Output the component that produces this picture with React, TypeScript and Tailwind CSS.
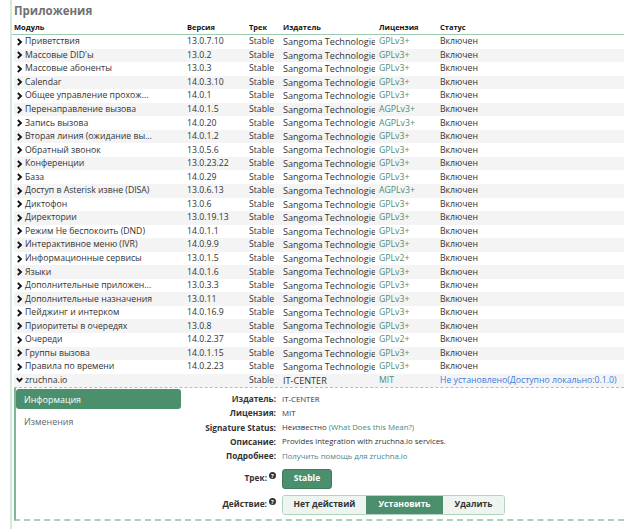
import React from "react";

type Mod = { name: string; ver: string; pub: string; lic: string; status: string };

const rows: Mod[] = [
  { name: "Приветствия", ver: "13.0.7.10", pub: "Sangoma Technologies", lic: "GPLv3+", status: "Включен" },
  { name: "Массовые DID'ы", ver: "13.0.2", pub: "Sangoma Technologies", lic: "GPLv3+", status: "Включен" },
  { name: "Массовые абоненты", ver: "13.0.3", pub: "Sangoma Technologies", lic: "GPLv3+", status: "Включен" },
  { name: "Calendar", ver: "14.0.3.10", pub: "Sangoma Technologies", lic: "GPLv3+", status: "Включен" },
  { name: "Общее управление прохож...", ver: "14.0.1", pub: "Sangoma Technologies", lic: "GPLv3+", status: "Включен" },
  { name: "Перенаправление вызова", ver: "14.0.1.5", pub: "Sangoma Technologies", lic: "AGPLv3+", status: "Включен" },
  { name: "Запись вызова", ver: "14.0.20", pub: "Sangoma Technologies", lic: "AGPLv3+", status: "Включен" },
  { name: "Вторая линия (ожидание вы...", ver: "14.0.1.2", pub: "Sangoma Technologies", lic: "GPLv3+", status: "Включен" },
  { name: "Обратный звонок", ver: "13.0.5.6", pub: "Sangoma Technologies", lic: "GPLv3+", status: "Включен" },
  { name: "Конференции", ver: "13.0.23.22", pub: "Sangoma Technologies", lic: "GPLv3+", status: "Включен" },
  { name: "База", ver: "14.0.29", pub: "Sangoma Technologies", lic: "GPLv3+", status: "Включен" },
  { name: "Доступ в Asterisk извне (DISA)", ver: "13.0.6.13", pub: "Sangoma Technologies", lic: "AGPLv3+", status: "Включен" },
  { name: "Диктофон", ver: "13.0.6", pub: "Sangoma Technologies", lic: "GPLv3+", status: "Включен" },
  { name: "Директории", ver: "13.0.19.13", pub: "Sangoma Technologies", lic: "GPLv3+", status: "Включен" },
  { name: "Режим Не беспокоить (DND)", ver: "14.0.1.1", pub: "Sangoma Technologies", lic: "GPLv3+", status: "Включен" },
  { name: "Интерактивное меню (IVR)", ver: "14.0.9.9", pub: "Sangoma Technologies", lic: "GPLv3+", status: "Включен" },
  { name: "Информационные сервисы", ver: "13.0.1.5", pub: "Sangoma Technologies", lic: "GPLv2+", status: "Включен" },
  { name: "Языки", ver: "14.0.1.6", pub: "Sangoma Technologies", lic: "GPLv3+", status: "Включен" },
  { name: "Дополнительные приложен...", ver: "13.0.3.3", pub: "Sangoma Technologies", lic: "GPLv3+", status: "Включен" },
  { name: "Дополнительные назначения", ver: "13.0.11", pub: "Sangoma Technologies", lic: "GPLv3+", status: "Включен" },
  { name: "Пейджинг и интерком", ver: "14.0.16.9", pub: "Sangoma Technologies", lic: "GPLv3+", status: "Включен" },
  { name: "Приоритеты в очередях", ver: "13.0.8", pub: "Sangoma Technologies", lic: "GPLv3+", status: "Включен" },
  { name: "Очереди", ver: "14.0.2.37", pub: "Sangoma Technologies", lic: "GPLv2+", status: "Включен" },
  { name: "Группы вызова", ver: "14.0.1.15", pub: "Sangoma Technologies", lic: "GPLv3+", status: "Включен" },
  { name: "Правила по времени", ver: "14.0.2.23", pub: "Sangoma Technologies", lic: "GPLv3+", status: "Включен" },
];

const Chevron = ({ down }: { down?: boolean }) => (
  <svg width="7" height="8" viewBox="0 0 7 8" className="shrink-0">
    {down ? (
      <path d="M0.8 2.2 L3.5 5.2 L6.2 2.2" fill="none" stroke="#111" strokeWidth="1.8" />
    ) : (
      <path d="M1.8 1 L5 4 L1.8 7" fill="none" stroke="#111" strokeWidth="1.8" />
    )}
  </svg>
);

const Help = () => (
  <span className="ml-[2px] -mt-[6px] inline-flex h-[7px] w-[7px] items-center justify-center rounded-full bg-[#333] text-[6px] font-bold leading-none text-white">
    ?
  </span>
);

function Cols({ name, ver, pub, lic, status, down, statusCls }: {
  name: string; ver: string; pub: string; lic: string; status: string; down?: boolean; statusCls?: string;
}) {
  return (
    <>
      <div className="flex w-[173px] shrink-0 items-center gap-[2px] pl-[2px]">
        <Chevron down={down} />
        <span className="whitespace-nowrap">{name}</span>
      </div>
      <div className="w-[62px] shrink-0">{ver}</div>
      <div className="w-[34px] shrink-0">Stable</div>
      <div className="mr-[4px] w-[92px] shrink-0 overflow-hidden whitespace-nowrap text-[9.1px]">{pub}</div>
      <div className="w-[61px] shrink-0 text-[#4f8b76]">{lic}</div>
      <div className={`whitespace-nowrap ${statusCls ?? ""}`}>{status}</div>
    </>
  );
}

function Field({ label, children }: { label: string; children: React.ReactNode }) {
  return (
    <div className="flex h-[14.3px] items-center">
      <div className="w-[101px] shrink-0 pr-[6px] text-right text-[8.3px] font-bold text-[#333]">{label}</div>
      <div className="whitespace-nowrap text-[7.8px] text-[#333]">{children}</div>
    </div>
  );
}

export default function App() {
  return (
    <div className="min-h-[529px] bg-white" style={{ fontFamily: '"Open Sans", sans-serif' }}>
      <div className="ml-[10px] min-h-[529px] border-l-2 border-[#d5e8dc]">
        <div className="h-[21px] pl-[2px] pt-[2px] text-[11.5px] font-bold text-[#707070]">Приложения</div>
        <div className="flex h-[14px] items-end border-b border-[#9ccbb0] pb-[1px] text-[7.5px] font-bold text-[#111]">
          <div className="w-[175px] shrink-0 pl-[2px]">Модуль</div>
          <div className="w-[62px] shrink-0">Версия</div>
          <div className="w-[34px] shrink-0">Трек</div>
          <div className="w-[96px] shrink-0">Издатель</div>
          <div className="w-[61px] shrink-0">Лицензия</div>
          <div>Статус</div>
        </div>
        <div className="pl-[2px]">
          {rows.map((m, i) => (
            <div
              key={m.name}
              className={`flex h-[13.55px] items-center text-[8.7px] text-[#333] ${i % 2 ? "bg-[#f4f4f4]" : "bg-white"}`}
            >
              <Cols {...m} />
            </div>
          ))}
          <div className="flex h-[13.55px] items-center bg-[#f4f4f4] text-[8.7px] text-[#333]">
            <Cols
              down
              name="zruchna.io"
              ver=""
              pub="IT-CENTER"
              lic="MIT"
              status="Не установлено(Доступно локально:0.1.0)"
              statusCls="text-[#3d7de0]"
            />
          </div>
          <div className="border-t border-dashed border-[#9ccbb0]">
            <div className="flex h-[133px] w-full border-b-2 border-l-2 border-dashed border-[#a9d0b8] [border-left-style:solid] [border-left-color:#7fb897]">
              <div className="w-[165px] shrink-0 pt-[1px]">
                <div className="flex h-[20px] items-center rounded-[3px] bg-[#4b8f6c] pl-[8px] text-[8.9px] text-white">Информация</div>
                <div className="mt-[6px] pl-[8px] text-[8.9px] text-[#666]">Изменения</div>
              </div>
              <div className="pt-[4px]">
                <Field label="Издатель:">IT-CENTER</Field>
                <Field label="Лицензия:">MIT</Field>
                <Field label="Signature Status:">
                  Неизвестно <span className="text-[#3f8a84]">(What Does this Mean?)</span>
                </Field>
                <Field label="Описание:">Provides integration with zruchna.io services.</Field>
                <Field label="Подробнее:">
                  <span className="text-[#4f8290]">Получить помощь для zruchna.io</span>
                </Field>
                <div className="mt-[5px] flex items-center">
                  <div className="flex w-[101px] shrink-0 items-center justify-end pr-[6px] text-[8.3px] font-bold text-[#333]">
                    Трек:
                    <Help />
                  </div>
                  <div className="flex h-[20px] w-[50px] items-center justify-center rounded-[3px] border border-[#3e7d5c] bg-[#4b8f6c] text-[8.5px] font-bold text-white">
                    Stable
                  </div>
                </div>
                <div className="mt-[6px] flex items-center">
                  <div className="flex w-[101px] shrink-0 items-center justify-end pr-[6px] text-[8.3px] font-bold text-[#333]">
                    Действие:
                    <Help />
                  </div>
                  <div className="flex h-[20px] overflow-hidden rounded-[3px] border border-[#b3d3bf] text-[8.5px] font-bold text-[#333]">
                    <div className="flex w-[83px] items-center justify-center bg-[#eef4f0]">Нет действий</div>
                    <div className="flex w-[77px] items-center justify-center bg-[#4b8f6c] text-white">Установить</div>
                    <div className="flex w-[61px] items-center justify-center bg-[#eef4f0]">Удалить</div>
                  </div>
                </div>
              </div>
            </div>
          </div>
        </div>
      </div>
    </div>
  );
}
